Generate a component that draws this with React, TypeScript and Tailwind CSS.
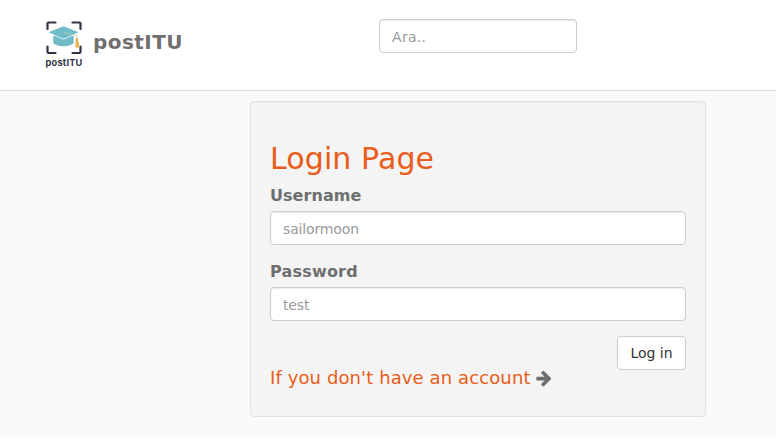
import React from "react";

const inputClass =
  "block h-[34px] w-full rounded border border-[#ccc] bg-white px-3 pt-[7px] pb-[5px] text-sm leading-5 text-[#555] shadow-[inset_0_1px_1px_rgba(0,0,0,0.075)] outline-none placeholder:text-[#999] placeholder:opacity-100";

function Logo() {
  return (
    <svg viewBox="0 0 40 50" className="h-[50px] w-10 shrink-0" aria-label="postITU logo">
      <g fill="none" stroke="#303448" strokeWidth="2.2" strokeLinecap="round" strokeLinejoin="round">
        <path d="M3.500 10V4.500q0-1 1-1H11.500M28.500 3.500h7q1 0 1 1V10M3.500 27.500v5.500q0 1 1 1h7M28.500 34h7q1 0 1-1v-5.500" />
      </g>
      <path d="M9.300 16.500v7.700c4.700 3.900 15.700 3.900 20.400 0v-7.700z" fill="#6fbcc6" />
      <path d="M4.600 13.200 19.500 7.300l15 5.900-15 6.500z" fill="#6fbcc6" stroke="#fff" strokeWidth="1.300" paintOrder="stroke" />
      <path d="m20 13.500 11.800 2.300q1 .2 1 1.200v5" fill="none" stroke="#b9cbb0" strokeWidth="0.700" />
      <path d="M31.800 19h2l1.700 9.500h-4.200z" fill="#e8b055" />
      <text x="1.500" y="46.700" textLength="36.800" lengthAdjust="spacing" fill="#303448" fontFamily="Inter, sans-serif" fontSize="9.2" fontWeight="700">
        postITU
      </text>
    </svg>
  );
}

function ArrowRight() {
  return (
    <svg viewBox="0 0 1792 1792" className="ml-1 size-[18px] fill-[#6f6f6f]" aria-hidden="true">
      <path d="M1600 960q0 54-37 91l-651 651q-39 37-91 37-51 0-90-37l-75-75q-38-38-38-91t38-91l293-293h-704q-52 0-84.500-37.500t-32.500-90.500v-128q0-53 32.500-90.500t84.500-37.500h704l-293-294q-38-36-38-90t38-90l75-75q38-38 90-38 53 0 91 38l651 651q37 35 37 90z" />
    </svg>
  );
}

function Field({ label, placeholder, spacing }: { label: string; placeholder: string; spacing: string }) {
  return (
    <label className="mb-[15px] block">
      <span className={`mb-1 block pt-px text-base leading-[22px] font-bold text-[#6f6f6f] ${spacing}`}>{label}</span>
      <input className={inputClass + " tracking-[-0.15px]"} placeholder={placeholder} />
    </label>
  );
}

export default function App() {
  return (
    <div className="h-[447px] w-[776px] overflow-hidden bg-white font-[Verdana,'DejaVu_Sans',sans-serif] text-[#6f6f6f]">
      <div className="h-[437px] bg-[#fafafa]">
        <header className="flex h-[91px] items-start border-b border-[#ddd] bg-white pt-[19px] pl-11">
          <div className="flex w-[335px] items-start">
            <Logo />
            <span className="ml-[9px] pt-2 text-[20px] leading-[30px] font-bold tracking-[0.45px]">postITU</span>
          </div>
          <div className="w-[198px]">
            <input className={inputClass + " tracking-[0.3px]"} placeholder="Ara.." />
          </div>
        </header>
        <main className="mt-[10px] ml-[250px] h-[316px] w-[456px] rounded border border-[#e3e3e3] bg-[#f4f4f4] px-[19px] pt-10 shadow-[inset_0_1px_1px_rgba(0,0,0,0.05)]">
          <h1 className="mb-[9px] text-[30px] leading-[33px] font-normal tracking-[0.1px] text-[#e95c19]">Login Page</h1>
          <Field label="Username" placeholder="sailormoon" spacing="tracking-[0.05px]" />
          <Field label="Password" placeholder="test" spacing="tracking-[0.2px]" />
          <div className="flex items-start justify-between">
            <a className="flex items-center pt-[31px] text-[18px] leading-[22px] tracking-[0.11px] text-[#e95c19]">
              <span>If you don't have an account</span>
              <ArrowRight />
            </a>
            <button className="h-[34px] w-[69px] rounded border border-[#ccc] bg-white text-sm leading-5 text-[#333]">
              Log in
            </button>
          </div>
        </main>
      </div>
    </div>
  );
}
